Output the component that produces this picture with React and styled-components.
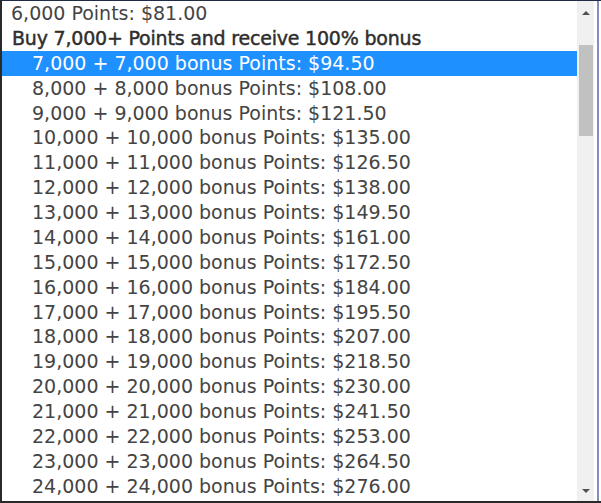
import React from "react";
import styled, { createGlobalStyle } from "styled-components";

const GlobalStyle = createGlobalStyle`
  html, body { margin: 0; padding: 0; background: #ffffff; }
  #root { width: 601px; height: 503px; }
`;

const Frame = styled.div`
  box-sizing: border-box;
  width: 601px;
  height: 503px;
  display: flex;
  background: #ffffff;
  border-top: 1px solid #1f2c45;
  border-left: 2px solid #2a2a2a;
  border-bottom: 2px solid #2a2a2a;
  overflow: hidden;
`;

const List = styled.div`
  flex: 1;
  display: flex;
  flex-direction: column;
  font-family: "DejaVu Sans", "Liberation Sans", sans-serif;
  font-size: 19px;
  overflow: hidden;
`;

const Option = styled.div`
  flex: none;
  height: 24.875px;
  line-height: 25px;
  white-space: nowrap;
  padding-left: ${(p) => (p.$nested ? "30px" : "9px")};
  color: ${(p) => (p.$selected ? "#ffffff" : "#444444")};
  background: ${(p) => (p.$selected ? "#1e90ff" : "transparent")};
`;

const GroupLabel = styled.div`
  flex: none;
  height: 24.875px;
  line-height: 25px;
  white-space: nowrap;
  padding-left: 10px;
  letter-spacing: -0.2px;
  color: #2e2e2e;
  -webkit-text-stroke: 0.45px #2e2e2e;
`;

const Scrollbar = styled.div`
  flex: none;
  width: 17px;
  display: flex;
  flex-direction: column;
  background: #f0f0f0;
`;

const ArrowButton = styled.div`
  flex: none;
  height: ${(p) => (p.$dir === "up" ? "24px" : "20px")};
  display: flex;
  align-items: center;
  justify-content: center;
`;

const Arrow = styled.div`
  width: 0;
  height: 0;
  border-left: 4px solid transparent;
  border-right: 4px solid transparent;
  ${(p) =>
    p.$dir === "up"
      ? "border-bottom: 4px solid #505050;"
      : "border-top: 4px solid #505050;"}
`;

const Thumb = styled.div`
  flex: none;
  margin: 20px 1px 0 2px;
  height: 91px;
  background: #c1c1c1;
`;

const Spacer = styled.div`
  flex: 1;
`;

const Gutter = styled.div`
  flex: none;
  width: 3px;
  background: #ffffff;
`;

const EdgeLine = styled.div`
  flex: none;
  width: 2px;
  background: #7f91b8;
`;

const Outer = styled.div`
  flex: none;
  width: 2px;
  background: #ffffff;
`;

const bonusRows = [
  [7000, "94.50"],
  [8000, "108.00"],
  [9000, "121.50"],
  [10000, "135.00"],
  [11000, "126.50"],
  [12000, "138.00"],
  [13000, "149.50"],
  [14000, "161.00"],
  [15000, "172.50"],
  [16000, "184.00"],
  [17000, "195.50"],
  [18000, "207.00"],
  [19000, "218.50"],
  [20000, "230.00"],
  [21000, "241.50"],
  [22000, "253.00"],
  [23000, "264.50"],
  [24000, "276.00"],
];

const fmt = (n) => n.toLocaleString("en-US");

export default function App() {
  return (
    <>
      <GlobalStyle />
      <Frame>
        <List>
          <Option>6,000 Points: $81.00</Option>
          <GroupLabel>Buy 7,000+ Points and receive 100% bonus</GroupLabel>
          {bonusRows.map(([pts, price], i) => (
            <Option key={pts} $nested $selected={i === 0}>
              {fmt(pts)} + {fmt(pts)} bonus Points: ${price}
            </Option>
          ))}
        </List>
        <Scrollbar>
          <ArrowButton $dir="up">
            <Arrow $dir="up" />
          </ArrowButton>
          <Thumb />
          <Spacer />
          <ArrowButton $dir="down">
            <Arrow $dir="down" />
          </ArrowButton>
        </Scrollbar>
        <Gutter />
        <EdgeLine />
        <Outer />
      </Frame>
    </>
  );
}
